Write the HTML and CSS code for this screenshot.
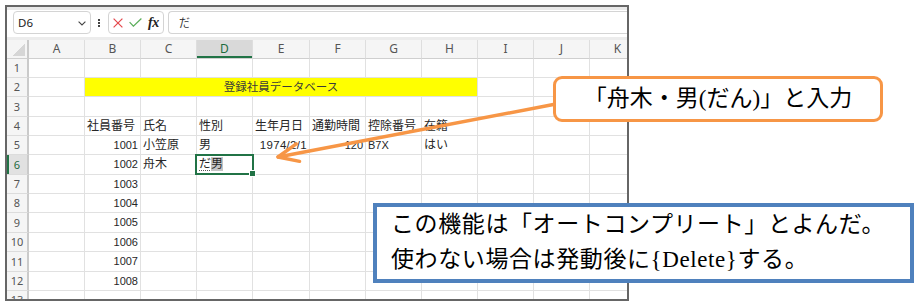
FILE: index.html
```html
<!DOCTYPE html>
<html lang="ja">
<head>
<meta charset="utf-8">
<title>オートコンプリート</title>
<link rel="stylesheet" href="styles.css">
</head>
<body>
<div class="page">
  <div class="window">
    <div class="strip"></div>
    <div class="fbar">
      <div class="namebox"><span class="ref">D6</span><svg class="chev" width="8" height="5" viewBox="0 0 8 5"><path d="M0.6 0.6 L4 4 L7.4 0.6" fill="none" stroke="#444" stroke-width="1.1"/></svg></div>
      <div class="vdots"><i></i><i></i><i></i></div>
      <div class="btns">
        <svg class="ico" width="10" height="10" viewBox="0 0 10 10"><path d="M0.6 0.6 L9.4 9.4 M9.4 0.6 L0.6 9.4" stroke="#e5484d" stroke-width="1.2"/></svg>
        <svg class="ico" width="13" height="9" viewBox="0 0 13 9"><path d="M0.6 4.2 L4.4 8.2 L12.4 0.5" fill="none" stroke="#5aad5a" stroke-width="1.2"/></svg>
        <span class="fx">fx</span>
      </div>
      <div class="finput">だ</div>
    </div>
    <div class="sep"></div>
    <div class="sheet">
      <div class="row hdr">
        <div class="corner"></div>
        <div class="ch">A</div><div class="ch">B</div><div class="ch">C</div><div class="ch sel">D</div><div class="ch">E</div><div class="ch">F</div><div class="ch">G</div><div class="ch">H</div><div class="ch">I</div><div class="ch">J</div><div class="ch">K</div>
      </div>
      <div class="row h19">
        <div class="rh">1</div>
        <div class="c"></div><div class="c"></div><div class="c"></div><div class="c"></div><div class="c"></div><div class="c"></div><div class="c"></div><div class="c"></div><div class="c"></div><div class="c"></div><div class="c"></div>
      </div>
      <div class="row h19">
        <div class="rh">2</div>
        <div class="c"></div><div class="c title">登録社員データベース</div><div class="c"></div><div class="c"></div><div class="c"></div>
      </div>
      <div class="row h20">
        <div class="rh">3</div>
        <div class="c"></div><div class="c"></div><div class="c"></div><div class="c"></div><div class="c"></div><div class="c"></div><div class="c"></div><div class="c"></div><div class="c"></div><div class="c"></div><div class="c"></div>
      </div>
      <div class="row h19">
        <div class="rh">4</div>
        <div class="c"></div><div class="c">社員番号</div><div class="c">氏名</div><div class="c">性別</div><div class="c">生年月日</div><div class="c">通勤時間</div><div class="c">控除番号</div><div class="c">在籍</div><div class="c"></div><div class="c"></div><div class="c"></div>
      </div>
      <div class="row h19">
        <div class="rh">5</div>
        <div class="c"></div><div class="c r num">1001</div><div class="c">小笠原</div><div class="c">男</div><div class="c r date">1974/2/1</div><div class="c r num">120</div><div class="c num">B7X</div><div class="c">はい</div><div class="c"></div><div class="c"></div><div class="c"></div>
      </div>
      <div class="row h20">
        <div class="rh sel">6</div>
        <div class="c"></div><div class="c r num">1002</div><div class="c">舟木</div><div class="c active"><span class="ime">だ</span><span class="hl">男</span></div><div class="c"></div><div class="c"></div><div class="c"></div><div class="c"></div><div class="c"></div><div class="c"></div><div class="c"></div>
      </div>
      <div class="row h19">
        <div class="rh">7</div>
        <div class="c"></div><div class="c r num">1003</div><div class="c"></div><div class="c"></div><div class="c"></div><div class="c"></div><div class="c"></div><div class="c"></div><div class="c"></div><div class="c"></div><div class="c"></div>
      </div>
      <div class="row h19">
        <div class="rh">8</div>
        <div class="c"></div><div class="c r num">1004</div><div class="c"></div><div class="c"></div><div class="c"></div><div class="c"></div><div class="c"></div><div class="c"></div><div class="c"></div><div class="c"></div><div class="c"></div>
      </div>
      <div class="row h20">
        <div class="rh">9</div>
        <div class="c"></div><div class="c r num">1005</div><div class="c"></div><div class="c"></div><div class="c"></div><div class="c"></div><div class="c"></div><div class="c"></div><div class="c"></div><div class="c"></div><div class="c"></div>
      </div>
      <div class="row h19">
        <div class="rh">10</div>
        <div class="c"></div><div class="c r num">1006</div><div class="c"></div><div class="c"></div><div class="c"></div><div class="c"></div><div class="c"></div><div class="c"></div><div class="c"></div><div class="c"></div><div class="c"></div>
      </div>
      <div class="row h20">
        <div class="rh">11</div>
        <div class="c"></div><div class="c r num">1007</div><div class="c"></div><div class="c"></div><div class="c"></div><div class="c"></div><div class="c"></div><div class="c"></div><div class="c"></div><div class="c"></div><div class="c"></div>
      </div>
      <div class="row h19">
        <div class="rh">12</div>
        <div class="c"></div><div class="c r num">1008</div><div class="c"></div><div class="c"></div><div class="c"></div><div class="c"></div><div class="c"></div><div class="c"></div><div class="c"></div><div class="c"></div><div class="c"></div>
      </div>
      <div class="row h19">
        <div class="rh">13</div>
        <div class="c"></div><div class="c"></div><div class="c"></div><div class="c"></div><div class="c"></div><div class="c"></div><div class="c"></div><div class="c"></div><div class="c"></div><div class="c"></div><div class="c"></div>
      </div>
    </div>
  </div>

  <svg class="arrow" width="916" height="306" viewBox="0 0 916 306">
    <path d="M556 104 L278 157" fill="none" stroke="#f79646" stroke-width="3.4" stroke-linecap="round"/>
    <path d="M296.3 143.9 L278 157 L299.6 161.3" fill="none" stroke="#f79646" stroke-width="3.4" stroke-linecap="round" stroke-linejoin="round"/>
  </svg>

  <div class="callout callout-orange">「舟木・男(だん)」と入力</div>
  <div class="callout callout-blue">
    <p>この機能は「オートコンプリート」とよんだ。</p>
    <p>使わない場合は発動後に{Delete}する。</p>
  </div>
</div>
</body>
</html>
```

FILE: styles.css
```css
* {
  box-sizing: border-box;
  margin: 0;
  padding: 0;
}

body {
  margin: 0;
  background: #ffffff;
  font-family: "Noto Sans", "Noto Sans CJK JP", sans-serif;
}

.page {
  position: relative;
  width: 916px;
  height: 306px;
  overflow: hidden;
  background: #ffffff;
  padding: 5px 0 0 5px;
}

/* ---------- Excel window ---------- */
.window {
  width: 624px;
  height: 296px;
  border: 2px solid #666666;
  overflow: hidden;
  display: flex;
  flex-direction: column;
  background: #ffffff;
}

.strip {
  height: 3px;
  flex: none;
  background: #e9e9e9;
}

.sep {
  height: 3px;
  flex: none;
  background: #ececec;
}

.fbar {
  height: 27px;
  flex: none;
  display: flex;
  align-items: flex-start;
  padding: 1px 0 0 6px;
  background: #ffffff;
}

.namebox {
  width: 78px;
  height: 23px;
  flex: none;
  border: 1px solid #d4d4d4;
  border-radius: 4px;
  background: #fff;
  display: flex;
  align-items: center;
  justify-content: space-between;
  padding: 0 4px 0 4px;
}

.ref {
  font-family: "Noto Sans", sans-serif;
  font-size: 11.5px;
  color: #222;
}

.chev {
  display: block;
  margin-top: 1px;
}

.vdots {
  margin: 8px 0 0 7px;
  width: 2px;
  display: flex;
  flex-direction: column;
  gap: 1px;
}

.vdots i {
  display: block;
  width: 2px;
  height: 2px;
  background: #444;
}

.btns {
  margin-left: 8px;
  width: 56px;
  height: 23px;
  flex: none;
  border: 1px solid #d4d4d4;
  border-radius: 4px;
  display: flex;
  align-items: center;
  padding-left: 4px;
  gap: 6px;
}

.ico {
  display: block;
}

.fx {
  font-family: "Liberation Serif", serif;
  font-style: italic;
  font-weight: bold;
  font-size: 14px;
  color: #222;
  letter-spacing: -0.5px;
  line-height: 14px;
}

.finput {
  margin-left: 4px;
  flex: 1;
  height: 23px;
  border: 1px solid #d4d4d4;
  border-right: none;
  border-radius: 4px 0 0 4px;
  padding-left: 10px;
  font-family: "Noto Sans CJK JP", sans-serif;
  font-size: 11px;
  line-height: 21px;
  color: #333;
}

/* ---------- sheet ---------- */
.sheet {
  display: flex;
  flex-direction: column;
}

.row {
  display: grid;
  grid-template-columns: 22px 56px 56px 56px 56px 57px 56px 56px 56px 56px 56px 56px;
  flex: none;
}

.hdr { height: 19px; }
.h19 { height: 19px; }
.h20 { height: 20px; }

.corner {
  background-color: #f5f5f5;
  border-right: 2px solid #cacaca;
  border-bottom: 1px solid #cfcfcf;
  background-image: linear-gradient(135deg, transparent 50%, #d6d6d6 50%);
  background-size: 12px 12px;
  background-position: right 2px bottom 2px;
  background-repeat: no-repeat;
}

.ch {
  background: #f5f5f5;
  border-right: 1px solid #dedede;
  border-bottom: 1px solid #cfcfcf;
  text-align: center;
  font-family: "Noto Sans", sans-serif;
  font-size: 12px;
  line-height: 18px;
  color: #555;
}

.ch.sel {
  background: #d9d9d9;
  color: #1d6b3e;
  box-shadow: inset 0 -2px 0 #217346;
}

.rh {
  background: #f5f5f5;
  border-right: 2px solid #cacaca;
  border-bottom: 1px solid #dcdcdc;
  text-align: center;
  font-family: "Noto Sans", sans-serif;
  font-size: 11px;
  line-height: 18px;
  color: #555;
}

.h20 .rh { line-height: 19px; }

.rh.sel {
  background: #e1e1e1;
  color: #1d6b3e;
  box-shadow: inset 2px 0 0 #217346;
}

.c {
  border-right: 1px solid #e1e1e1;
  border-bottom: 1px solid #e1e1e1;
  padding: 0 2px;
  white-space: nowrap;
  font-family: "Liberation Sans", "Noto Sans CJK JP", sans-serif;
  font-size: 12px;
  line-height: 18px;
  color: #262626;
}

.h20 .c { line-height: 19px; }

.r { text-align: right; }

.num { font-size: 11px; }

.date {
  font-size: 11.5px;
  letter-spacing: 0.3px;
}

.title {
  grid-column: span 7;
  background: #ffff00;
  text-align: center;
  font-size: 11.5px;
  color: #3a3a3a;
}

.active {
  position: relative;
  overflow: visible;
}

.active::after {
  content: "";
  position: absolute;
  left: -2px;
  top: -1px;
  right: -2px;
  bottom: -1px;
  border: 2px solid #217346;
}

.active::before {
  content: "";
  position: absolute;
  right: -4px;
  bottom: -3px;
  width: 5px;
  height: 5px;
  background: #217346;
  border: 1px solid #fff;
  z-index: 2;
}

.ime {
  text-decoration: underline dotted #555;
  text-underline-offset: 2px;
}

.hl {
  background: #c4c4c4;
}

/* ---------- overlays ---------- */
.arrow {
  position: absolute;
  left: 0;
  top: 0;
  pointer-events: none;
}

.callout {
  position: absolute;
  background: #ffffff;
  color: #000000;
  font-family: "Liberation Serif", "Noto Sans CJK JP", serif;
  font-size: 23px;
}

.callout-orange {
  left: 553px;
  top: 76px;
  width: 330px;
  height: 46px;
  border: 3px solid #f79646;
  border-radius: 9px;
  text-align: center;
  line-height: 39px;
}

.callout-blue {
  left: 373px;
  top: 203px;
  width: 541px;
  height: 80px;
  border: 4px solid #4f81bd;
  padding: 0 0 0 14px;
  line-height: 35px;
  letter-spacing: 0.6px;
}

.callout-blue p {
  white-space: nowrap;
}
```
